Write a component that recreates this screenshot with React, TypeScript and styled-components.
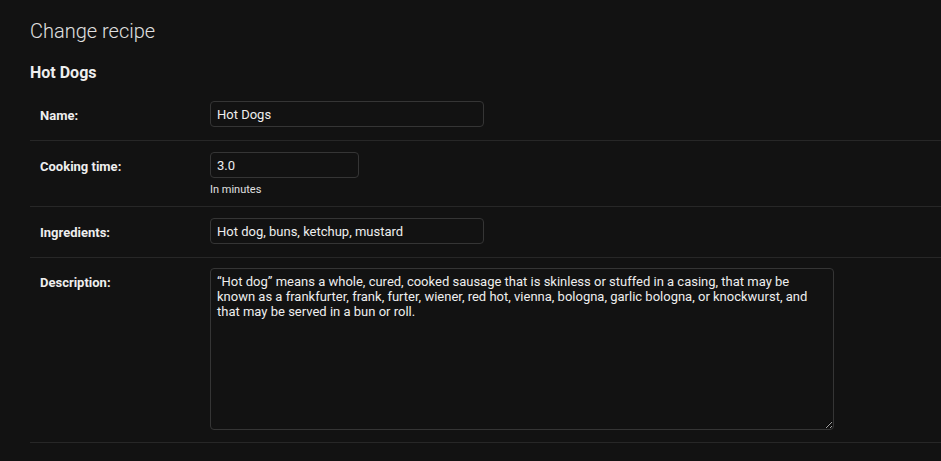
import React from "react";
import styled, { createGlobalStyle } from "styled-components";

const Global = createGlobalStyle`
  html, body {
    margin: 0;
    padding: 0;
    background: #121212;
  }
  body {
    font-family: Roboto, "Noto Sans", "Liberation Sans", sans-serif;
    color: #eeeeee;
    min-height: 461px;
  }
`;

const Page = styled.div`
  padding: 19px 0 0 30px;
  min-height: 461px;
  box-sizing: border-box;
  background: #121212;
`;

const Title = styled.h1`
  margin: 0 0 20px;
  font-size: 20px;
  font-weight: 300;
  line-height: normal;
  color: #e0e0e0;
`;

const Subtitle = styled.h2`
  margin: 0 0 8px;
  font-size: 16px;
  font-weight: 700;
  line-height: normal;
  color: #eeeeee;
`;

const Fieldset = styled.fieldset`
  margin: 0;
  padding: 0;
  border: none;
  min-width: 0;
`;

const Row = styled.div<{ $padTop?: number }>`
  padding: ${(p) => p.$padTop ?? 11}px 10px 10px;
  border-bottom: 1px solid #272727;
  font-size: 13px;
`;

const FieldLine = styled.div`
  display: flex;
  align-items: flex-start;
  min-height: 29px;
`;

const Label = styled.label`
  flex: 0 0 160px;
  padding: 7px 10px 0 0;
  font-size: 13px;
  font-weight: 700;
  line-height: normal;
  color: #eeeeee;
`;

const Control = styled.div`
  display: flex;
  flex-direction: column;
`;

const TextInput = styled.input<{ $width: number }>`
  box-sizing: border-box;
  width: ${(p) => p.$width}px;
  height: 26px;
  padding: 5px 6px;
  margin: 0;
  border: 1px solid #353535;
  border-radius: 4px;
  background: #121212;
  color: #eeeeee;
  font-family: Roboto, "Noto Sans", "Liberation Sans", sans-serif;
  font-size: 13px;
  outline: none;
`;

const TextArea = styled.textarea`
  box-sizing: border-box;
  display: block;
  width: 624px;
  height: 162px;
  padding: 5px 6px;
  margin: 0 0 2px;
  border: 1px solid #353535;
  border-radius: 4px;
  background: #121212;
  color: #eeeeee;
  font-family: Roboto, "Noto Sans", "Liberation Sans", sans-serif;
  font-size: 13px;
  line-height: normal;
  resize: both;
  outline: none;
`;

const Help = styled.div`
  margin: 2px 0 0 170px;
  font-size: 11px;
  line-height: normal;
  color: #e0e0e0;
`;

const description =
  "\u201cHot dog\u201d means a whole, cured, cooked sausage that is skinless or stuffed in a casing, that may be known as a frankfurter, frank, furter, wiener, red hot, vienna, bologna, garlic bologna, or knockwurst, and that may be served in a bun or roll.";

export default function App() {
  return (
    <>
      <Global />
      <Page>
        <Title>Change recipe</Title>
        <Subtitle>Hot Dogs</Subtitle>
        <Fieldset>
          <Row>
            <FieldLine>
              <Label htmlFor="id_name">Name:</Label>
              <Control>
                <TextInput id="id_name" $width={274} defaultValue="Hot Dogs" />
              </Control>
            </FieldLine>
          </Row>
          <Row>
            <FieldLine>
              <Label htmlFor="id_cooking_time">Cooking time:</Label>
              <Control>
                <TextInput id="id_cooking_time" $width={149} defaultValue="3.0" />
              </Control>
            </FieldLine>
            <Help>In minutes</Help>
          </Row>
          <Row>
            <FieldLine>
              <Label htmlFor="id_ingredients">Ingredients:</Label>
              <Control>
                <TextInput
                  id="id_ingredients"
                  $width={274}
                  defaultValue="Hot dog, buns, ketchup, mustard"
                />
              </Control>
            </FieldLine>
          </Row>
          <Row $padTop={10}>
            <FieldLine>
              <Label htmlFor="id_description">Description:</Label>
              <Control>
                <TextArea id="id_description" defaultValue={description} />
              </Control>
            </FieldLine>
          </Row>
        </Fieldset>
      </Page>
    </>
  );
}
